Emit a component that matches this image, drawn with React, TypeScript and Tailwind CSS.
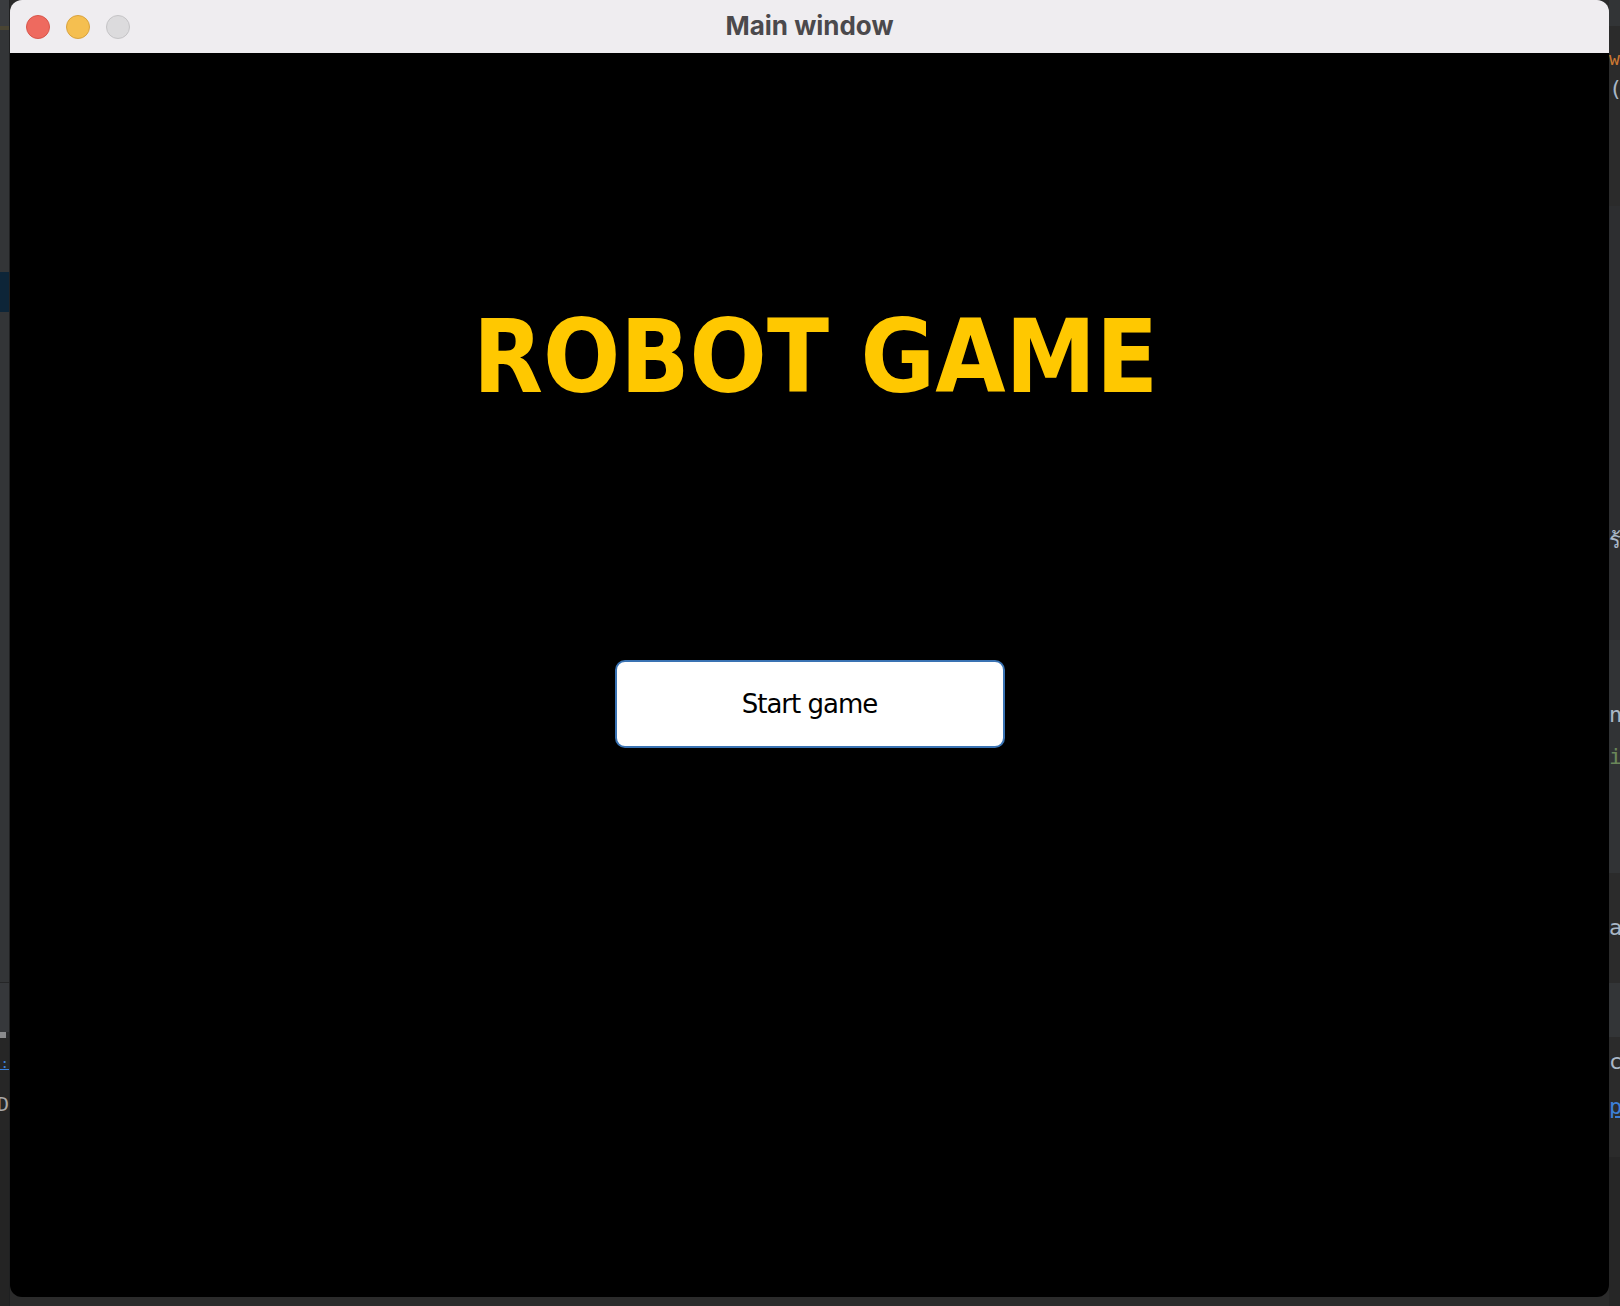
import React from "react";

function LeftStrip() {
  return (
    <div className="w-[10px] h-full flex flex-col overflow-hidden border-r border-[#1f2021] font-['DejaVu_Sans_Mono',monospace] text-[14px] leading-none">
      <div className="h-[26px] bg-[#3a3c3f]" />
      <div className="h-[4px] bg-[#4a4533]" />
      <div className="h-[242px] bg-[#333537]" />
      <div className="h-[40px] bg-[#0d2538]" />
      <div className="h-[670px] bg-[#333537]" />
      <div className="h-[1px] bg-[#252627]" />
      <div className="h-[49px] bg-[#36383b]" />
      <div className="h-[6px] bg-[#2a2b2d] flex">
        <div className="w-[6px] h-full bg-[#8a8b8d]" />
      </div>
      <div className="h-[92px] bg-[#262626] flex flex-col items-end pt-[18px] gap-[24px] whitespace-nowrap">
        <span className="text-[#3d7fd6] underline">n:</span>
        <span className="text-[#a9a9a9] text-[20px]">D</span>
      </div>
      <div className="flex-1 bg-[#242424]" />
    </div>
  );
}

function RightStrip() {
  return (
    <div className="w-[11px] h-full flex flex-col overflow-hidden font-['DejaVu_Sans_Mono',monospace] text-[18px] leading-none whitespace-nowrap">
      <div className="h-[26px] bg-[#323436]" />
      <div className="h-[180px] bg-[#2b2b2b] flex flex-col pt-[24px] gap-[10px]">
        <span className="text-[#cc7832]">w</span>
        <span className="text-[#a9b7c6] text-[22px]">(</span>
      </div>
      <div className="h-[434px] bg-[#2d2e30] flex flex-col pt-[324px]">
        <span className="text-[#a9b7c6] text-[22px]">ร้</span>
      </div>
      <div className="h-[233px] bg-[#313335] flex flex-col pt-[64px] gap-[20px] text-[22px]">
        <span className="text-[#a9b7c6]">n</span>
        <span className="text-[#6a8759]">i</span>
      </div>
      <div className="h-[110px] bg-[#2b2b2b] flex flex-col pt-[44px] text-[22px]">
        <span className="text-[#a9b7c6]">a</span>
      </div>
      <div className="h-[54px] bg-[#333537]" />
      <div className="h-[120px] bg-[#2b2b2b] flex flex-col pt-[14px] gap-[23px] text-[22px]">
        <span className="text-[#a9b7c6]">c</span>
        <span className="text-[#3d7fd6] underline">p</span>
      </div>
      <div className="flex-1 bg-[#262626]" />
    </div>
  );
}

function TitleBar() {
  return (
    <div className="h-[53px] bg-[#efedf0] grid grid-cols-[1fr_auto_1fr] items-center shrink-0">
      <div className="flex items-center gap-[16px] pl-[16px]">
        <div className="w-[24px] h-[24px] rounded-full bg-[#ee6a5f] border border-[#d8564b]" />
        <div className="w-[24px] h-[24px] rounded-full bg-[#f5bf50] border border-[#d9a33f]" />
        <div className="w-[24px] h-[24px] rounded-full bg-[#dcdbdd] border border-[#c5c4c6]" />
      </div>
      <div className="font-['Inter',sans-serif] font-bold text-[26px] text-[#4b494c] leading-none pb-[2px]">
        Main window
      </div>
      <div />
    </div>
  );
}

export default function App() {
  return (
    <div className="w-[1620px] h-[1306px] bg-[#2b2b2b] flex overflow-hidden">
      <LeftStrip />
      <div className="w-[1599px] h-[1297px] flex flex-col rounded-[12px] overflow-hidden">
        <TitleBar />
        <div className="flex-1 bg-black flex flex-col items-center">
          <h1 className="pt-[254px] pl-[12px] whitespace-nowrap">
            <span className="inline-block font-['DejaVu_Sans',sans-serif] font-bold text-[101px] leading-none text-[#ffc800] scale-x-[0.9] origin-center">
              ROBOT GAME
            </span>
          </h1>
          <button className="mt-[252px] w-[390px] h-[88px] bg-white border-2 border-[#3a73b3] rounded-[10px] font-['DejaVu_Sans',sans-serif] text-[26px] text-black tracking-[-1px] flex items-center justify-center">
            Start game
          </button>
        </div>
      </div>
      <RightStrip />
    </div>
  );
}
